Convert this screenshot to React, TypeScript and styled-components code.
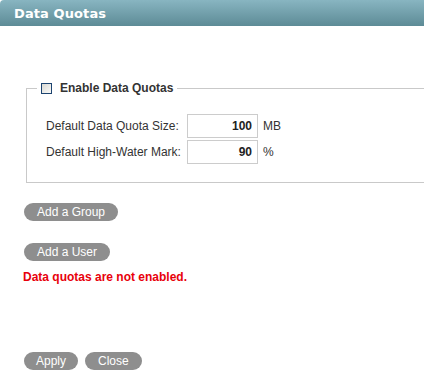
import React from "react";
import styled, { createGlobalStyle } from "styled-components";

const Global = createGlobalStyle`
  html, body { margin: 0; padding: 0; background: #fff; overflow: hidden; }
  body { font-family: "Liberation Sans", Arial, sans-serif; font-size: 12px; color: #333; }
`;

const Page = styled.div`
  width: 424px;
  height: 384px;
  display: flex;
  flex-direction: column;
`;

const Header = styled.div`
  height: 26px;
  display: flex;
  align-items: center;
  padding-left: 14px;
  background: linear-gradient(#88b5c1, #5d8b96);
  border-top-left-radius: 4px;
`;

const Title = styled.h1`
  margin: 0;
  font-family: "DejaVu Sans", Verdana, sans-serif;
  font-weight: bold;
  font-size: 13px;
  letter-spacing: 0.1px;
  color: #fff;
`;

const Body = styled.div`
  display: flex;
  flex-direction: column;
  align-items: flex-start;
  padding: 55px 0 0 24px;
`;

const Fieldset = styled.fieldset`
  align-self: stretch;
  margin: 0 0 20px 2px;
  padding: 19px 0 18px 19px;
  border: 1px solid #c9c9c9;
  border-right: none;
  min-width: 0;
`;

const Legend = styled.legend`
  display: flex;
  align-items: center;
  gap: 8px;
  margin-left: -9px;
  padding: 0 4px;
  font-weight: bold;
  font-size: 12px;
  color: #333;
`;

const Check = styled.input`
  appearance: none;
  width: 11px;
  height: 11px;
  margin: 0;
  border: 1px solid #1d4470;
  background: linear-gradient(135deg, #d9d9d4, #fafaf8);
`;

const Grid = styled.div`
  display: grid;
  grid-template-columns: 137px 71px auto;
  column-gap: 4px;
  row-gap: 2px;
  align-items: center;
`;

const Label = styled.span`
  font-size: 12px;
  color: #333;
`;

const NumInput = styled.input`
  box-sizing: border-box;
  width: 71px;
  height: 24px;
  margin: 0;
  padding: 0 5px;
  border: 1px solid #cccccc;
  text-align: right;
  font-family: "Liberation Sans", Arial, sans-serif;
  font-size: 12px;
  font-weight: bold;
  color: #222;
  outline: none;
`;

const Unit = styled.span`
  font-size: 12px;
  color: #333;
  padding-left: 1px;
`;

const PillButton = styled.button<{ $pad?: number }>`
  height: 18px;
  padding: 0 ${(p) => p.$pad ?? 13}px;
  border: none;
  border-radius: 9px;
  background: #8e8e8e;
  color: #fff;
  font-family: "Liberation Sans", Arial, sans-serif;
  font-size: 12px;
  line-height: 18px;
  cursor: pointer;
`;

const GroupBtnRow = styled.div`
  margin-bottom: 22px;
`;

const ErrorText = styled.div`
  margin: 9px 0 0 -1px;
  color: #e8000b;
  font-weight: bold;
  font-size: 12px;
`;

const Footer = styled.div`
  display: flex;
  gap: 7px;
  margin-top: 68px;
`;

export default function App() {
  return (
    <Page>
      <Global />
      <Header>
        <Title>Data Quotas</Title>
      </Header>
      <Body>
        <Fieldset>
          <Legend>
            <Check type="checkbox" />
            Enable Data Quotas
          </Legend>
          <Grid>
            <Label>Default Data Quota Size:</Label>
            <NumInput defaultValue="100" />
            <Unit>MB</Unit>
            <Label>Default High-Water Mark:</Label>
            <NumInput defaultValue="90" />
            <Unit>%</Unit>
          </Grid>
        </Fieldset>
        <GroupBtnRow>
          <PillButton>Add a Group</PillButton>
        </GroupBtnRow>
        <PillButton>Add a User</PillButton>
        <ErrorText>Data quotas are not enabled.</ErrorText>
        <Footer>
          <PillButton $pad={12}>Apply</PillButton>
          <PillButton>Close</PillButton>
        </Footer>
      </Body>
    </Page>
  );
}
